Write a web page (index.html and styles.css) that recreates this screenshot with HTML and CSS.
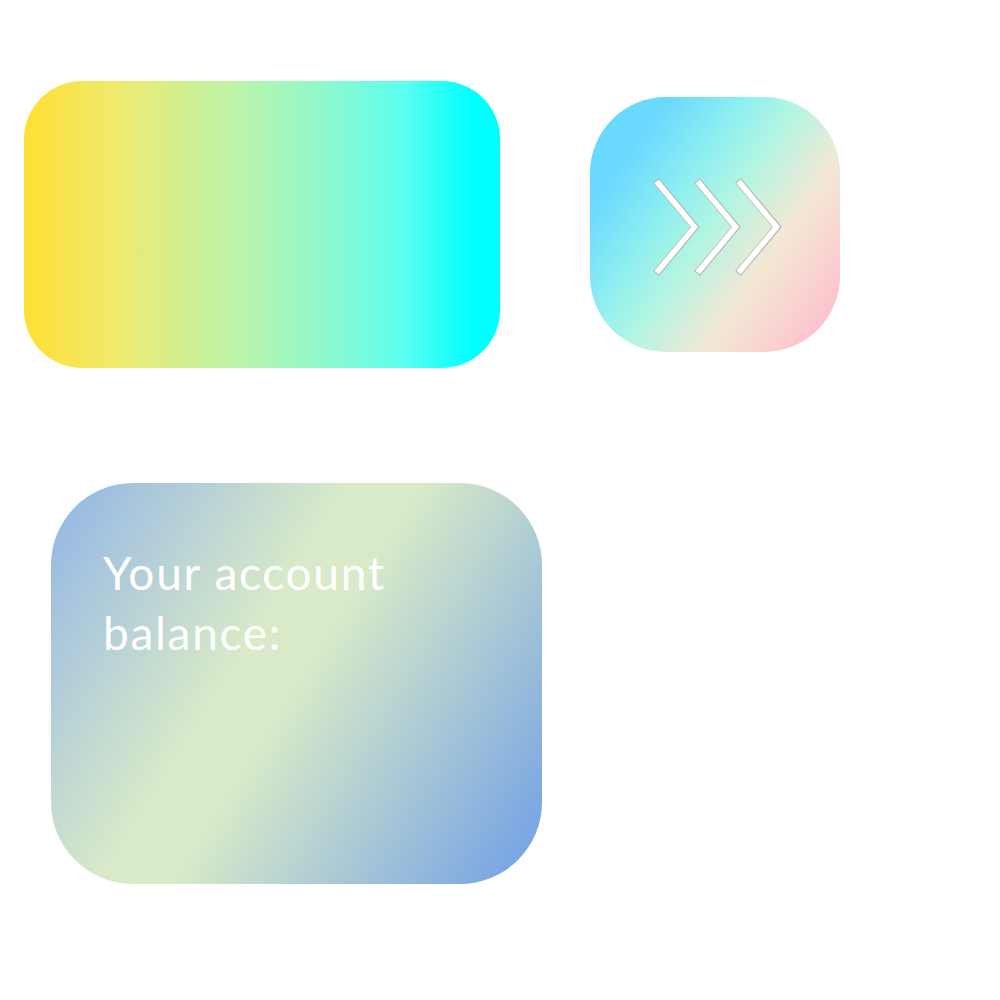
FILE: index.html
```html
<!DOCTYPE html>
<html>
<head>
<meta charset="utf-8">
<link rel="stylesheet" href="styles.css">
</head>
<body>
<div class="page">
  <div class="top-row">
    <div class="card-rainbow"></div>
    <div class="card-next">
      <svg class="chevrons" width="250" height="255" viewBox="0 0 250 255">
        <g fill="none" stroke-linecap="butt" stroke-linejoin="miter">
          <g stroke="#b5b5b5" stroke-width="7.4">
            <path d="M66 83.5 L105 130 L66 176.5"/>
            <path d="M107 83.5 L146 130 L107 176.5"/>
            <path d="M148 83.5 L187 130 L148 176.5"/>
          </g>
          <g stroke="#ffffff" stroke-width="5.6">
            <path d="M66.6 84.4 L104.6 130 L66.6 175.6"/>
            <path d="M107.6 84.4 L145.6 130 L107.6 175.6"/>
            <path d="M148.6 84.4 L186.6 130 L148.6 175.6"/>
          </g>
        </g>
      </svg>
    </div>
  </div>
  <div class="card-balance">
    <p class="balance-label">Your account<br>balance:</p>
  </div>
</div>
</body>
</html>
```
FILE: styles.css
```css
html, body {
  margin: 0;
  padding: 0;
  background: #ffffff;
}
.page {
  width: 1000px;
  height: 1000px;
  padding-top: 81px;
  box-sizing: border-box;
}
.top-row {
  display: flex;
  align-items: flex-start;
  padding-left: 24px;
  gap: 90px;
}
.card-rainbow {
  width: 476px;
  height: 287px;
  border-radius: 58px;
  background: linear-gradient(90deg, #ffe033 0%, #f0e96a 18%, #c3f4a3 42%, #92f7cd 62%, #5afff0 80%, #00ffff 94%, #00ffff 100%);
}
.card-next {
  width: 250px;
  height: 255px;
  margin-top: 16px;
  border-radius: 76px;
  background: linear-gradient(125deg, #6ad8ff 18%, #8eeff0 36%, #b4f5e2 50%, #f3e8d4 68%, #ffbccd 96%);
  overflow: hidden;
}
.chevrons {
  display: block;
}
.card-balance {
  width: 491px;
  height: 401px;
  margin-left: 51px;
  margin-top: 115px;
  border-radius: 82px;
  background: linear-gradient(122deg, #9abbe3 5%, #d8eac8 40%, #d8eac8 50%, #7ba7e3 94%);
  padding: 60px 52px;
  box-sizing: border-box;
}
.balance-label {
  margin: 0;
  font-family: Lato, "Open Sans", sans-serif;
  font-size: 46px;
  line-height: 60px;
  letter-spacing: 1.7px;
  color: #ffffff;
  font-weight: 400;
}
```
